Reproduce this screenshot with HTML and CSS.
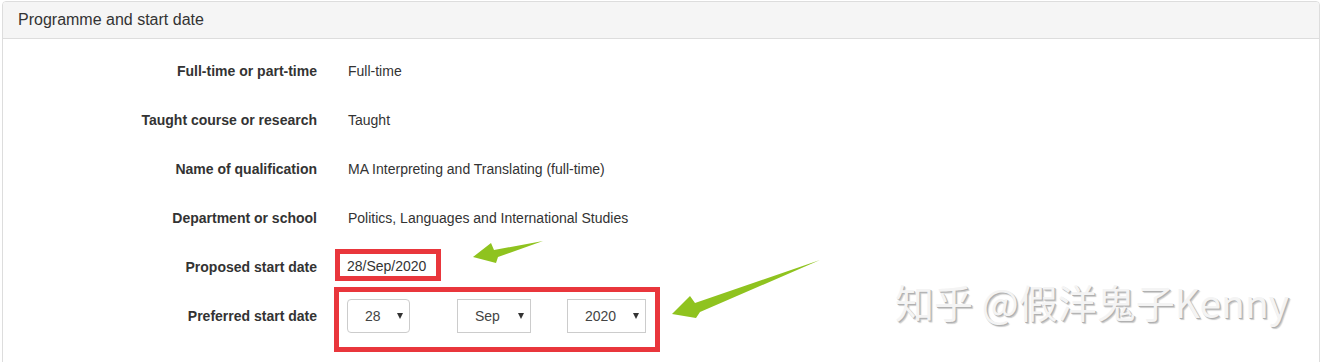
FILE: index.html
```html
<!DOCTYPE html>
<html lang="en">
<head>
<meta charset="utf-8">
<title>Programme and start date</title>
<link rel="stylesheet" href="styles.css">
</head>
<body>
<div class="panel">
  <div class="panel-heading">Programme and start date</div>
  <div class="panel-body">
    <div class="row">
      <div class="label">Full-time or part-time</div>
      <div class="value">Full-time</div>
    </div>
    <div class="row">
      <div class="label">Taught course or research</div>
      <div class="value">Taught</div>
    </div>
    <div class="row">
      <div class="label">Name of qualification</div>
      <div class="value">MA Interpreting and Translating (full-time)</div>
    </div>
    <div class="row">
      <div class="label">Department or school</div>
      <div class="value">Politics, Languages and International Studies</div>
    </div>
    <div class="row">
      <div class="label">Proposed start date</div>
      <div class="value"><span class="mark mark-proposed">28/Sep/2020</span></div>
    </div>
    <div class="row">
      <div class="label">Preferred start date</div>
      <div class="value">
        <div class="mark mark-preferred">
          <div class="select select-day">28<span class="caret"></span></div>
          <div class="select select-month">Sep<span class="caret"></span></div>
          <div class="select select-year">2020<span class="caret"></span></div>
        </div>
      </div>
    </div>
  </div>
</div>
<svg class="arrows" width="1322" height="362" viewBox="0 0 1322 362" aria-hidden="true">
  <polygon fill="#8fc31f" points="473,257 491,243 494,250 543,241 498,257 496,263"/>
  <polygon fill="#8fc31f" points="672,314 690,296 695,303 820,260 700,312 696,318"/>
</svg>
<div class="watermark">知乎 @假洋鬼子Kenny</div>
</body>
</html>
```
FILE: styles.css
```css
html, body {
  margin: 0;
  padding: 0;
  background: #ffffff;
}

body {
  font-family: "Liberation Sans", Arial, sans-serif;
  color: #333333;
  height: 362px;
  overflow: hidden;
}

.panel {
  margin: 1px 0 0 2px;
  width: 1318px;
  box-sizing: border-box;
  border: 1px solid #dddddd;
  border-radius: 4px 4px 0 0;
  background: #ffffff;
}

.panel-heading {
  background: #f5f5f5;
  border-bottom: 1px solid #dddddd;
  border-radius: 3px 3px 0 0;
  padding: 10px 15px;
  font-size: 16px;
  line-height: 16px;
  color: #333333;
}

.panel-body {
  padding: 7px 0 40px 0;
}

.row {
  display: grid;
  grid-template-columns: 314px 1fr;
  grid-template-rows: 49px;
  column-gap: 31px;
  align-items: center;
  height: 49px;
  font-size: 14px;
  line-height: 16px;
}

.label {
  text-align: right;
  font-weight: bold;
  color: #333333;
}

.value {
  color: #333333;
  display: flex;
  align-items: center;
}

.mark {
  border: 5px solid #e9363c;
  box-sizing: border-box;
}

.mark-proposed {
  display: inline-block;
  margin: 0 0 4px -13px;
  padding: 4px 10px 2px 7px;
  height: 32px;
}

.mark-preferred {
  display: flex;
  align-items: flex-start;
  margin: 7px 0 0 -14px;
  width: 326px;
  height: 65px;
  padding: 7px 9px 0 8px;
}

.select {
  display: flex;
  align-items: center;
  justify-content: space-between;
  box-sizing: border-box;
  height: 34px;
  border: 1px solid #cccccc;
  padding: 0 6px 0 17px;
  font-size: 14px;
  color: #444444;
  background: #ffffff;
}

.select-day {
  width: 63px;
  border-radius: 4px;
}

.select-month {
  width: 74px;
  margin-left: 47px;
}

.select-year {
  width: 79px;
  margin-left: 36px;
}

.caret {
  width: 0;
  height: 0;
  border-left: 3px solid transparent;
  border-right: 3px solid transparent;
  border-top: 6px solid #333333;
}

.arrows {
  position: absolute;
  left: 0;
  top: 0;
  pointer-events: none;
}

.watermark {
  position: absolute;
  left: 895px;
  top: 281px;
  font-family: "Noto Sans CJK SC", "Noto Sans", sans-serif;
  font-size: 39px;
  line-height: 40px;
  color: #f4f4f4;
  text-shadow: 1px 1px 0 #b0b0b0, 2px 2px 1px #cccccc;
  white-space: nowrap;
  pointer-events: none;
}
```
